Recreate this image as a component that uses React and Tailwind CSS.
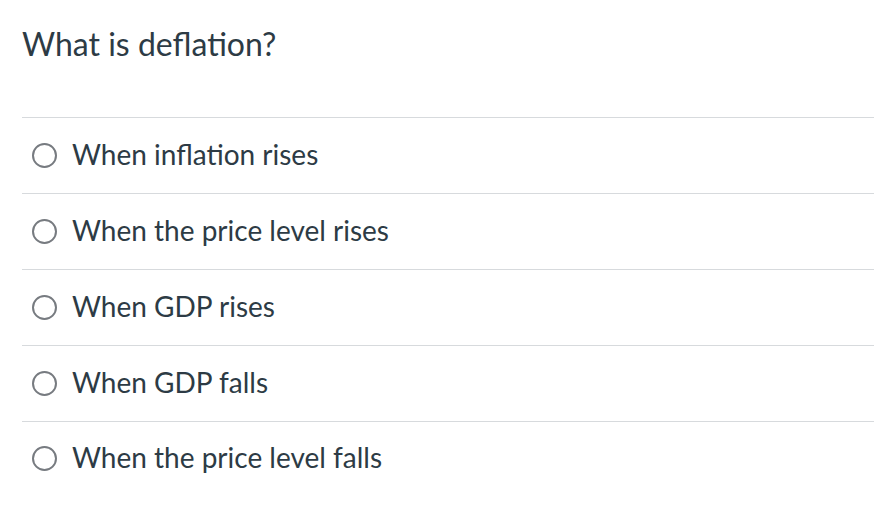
export default function App() {
  const options = [
    "When inflation rises",
    "When the price level rises",
    "When GDP rises",
    "When GDP falls",
    "When the price level falls",
  ];
  return (
    <div className="w-[894px] h-[520px] bg-white pl-[22px] pr-[20px] text-[#2d3b45]" style={{ fontFamily: "Lato, 'Open Sans', sans-serif" }}>
      <div className="h-[118px] border-b border-[#d7dadd] pt-[24px]">
        <div className="text-[32px] leading-[40px]">What is deflation?</div>
      </div>
      {options.map((o, i) => (
        <div key={i} className={`flex items-center gap-[15px] pl-[10px] ${i < options.length - 1 ? "h-[76px] border-b border-[#d7dadd]" : "h-[73px]"}`}>
          <span className="w-[25px] h-[25px] rounded-full border-2 border-[#777b80] shrink-0"></span>
          <span className="text-[28px] leading-[32px] -mt-[3px]">{o}</span>
        </div>
      ))}
    </div>
  );
}
